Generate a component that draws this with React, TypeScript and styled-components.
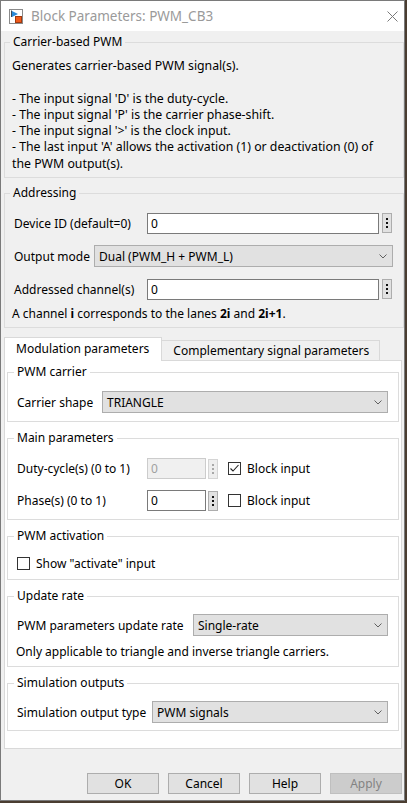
import React from "react";
import styled, { createGlobalStyle } from "styled-components";

const GlobalStyle = createGlobalStyle`
  html, body { margin: 0; padding: 0; }
  body {
    width: 407px; height: 803px; overflow: hidden;
    background: #4a3d31;
    font-family: "Noto Sans", "Open Sans", "DejaVu Sans", sans-serif;
    font-size: 12px; color: #000;
  }
  *, *::before, *::after { box-sizing: border-box; }
`;

const Window = styled.div`
  width: 405px; height: 801px;
  border: 1px solid #7a7a7a;
  background: #f0f0f0;
  display: flex; flex-direction: column;
  overflow: hidden;
`;

const TitleBar = styled.div`
  height: 30px; flex: none; background: #fff;
  display: flex; align-items: center;
  padding-left: 8px;
`;

const TitleText = styled.span`
  margin-left: 8px; color: #9a9a9a; font-size: 13.5px; white-space: nowrap;
`;

const CloseBtn = styled.div`
  margin-left: auto; width: 24px; height: 30px;
  display: flex; align-items: center; justify-content: center;
`;

const Body = styled.div`
  flex: 1; display: flex; flex-direction: column;
  padding: 3px 0 0 3px;
`;

const Group = styled.fieldset<{ $pad: string; $mt?: number }>`
  margin: ${p => p.$mt ?? 0}px 0 0 0;
  min-width: 0;
  border: 1px solid #dcdcdc;
  padding: ${p => p.$pad};
  display: flex; flex-direction: column;
`;

const Legend = styled.legend`
  padding: 0 3px; margin-left: -3px; line-height: 16px; white-space: nowrap;
`;

const Description = styled.div`
  line-height: 16.3px; white-space: nowrap; margin-left: -1px;
  font-size: 12.3px;
`;

const FormRow = styled.div<{ $gap?: number; $pl?: number; $pr?: number }>`
  display: flex; align-items: center; height: 22px;
  margin-top: ${p => p.$gap ?? 0}px;
  padding-left: ${p => p.$pl ?? 0}px;
  padding-right: ${p => p.$pr ?? 0}px;
`;

const Label = styled.span<{ $w?: number }>`
  flex: none; white-space: nowrap;
  width: ${p => (p.$w ? `${p.$w}px` : "auto")};
`;

const TextBox = styled.div<{ $w?: number; $disabled?: boolean }>`
  height: 21px;
  ${p => (p.$w ? `width: ${p.$w}px; flex: none;` : "flex: 1;")}
  background: ${p => (p.$disabled ? "#f0f0f0" : "#fff")};
  border: 1px solid ${p => (p.$disabled ? "#cccccc" : "#7a7a7a")};
  color: ${p => (p.$disabled ? "#a0a0a0" : "#000")};
  display: flex; align-items: center; padding-left: 3px;
`;

const EllipsisBtn = styled.span<{ $disabled?: boolean; $ml?: number }>`
  flex: none; width: 10px; height: 20px;
  margin-left: ${p => p.$ml ?? 3}px;
  border: 1px solid ${p => (p.$disabled ? "#d5d5d5" : "#adadad")};
  background: ${p => (p.$disabled ? "#eeeeee" : "#e1e1e1")};
  display: flex; flex-direction: column; align-items: center; justify-content: center; gap: 2px;
`;

const Dot = styled.i<{ $disabled?: boolean }>`
  display: block; width: 2px; height: 2px;
  background: ${p => (p.$disabled ? "#a8a8a8" : "#111")};
`;

const Combo = styled.div`
  flex: 1; height: 22px;
  background: #e1e1e1; border: 1px solid #adadad;
  display: flex; align-items: center; justify-content: space-between;
  padding: 0 5px 0 4px;
`;

const Note = styled.div<{ $mt?: number; $ml?: number }>`
  line-height: 16px; white-space: nowrap;
  margin-top: ${p => p.$mt ?? 0}px;
  margin-left: ${p => p.$ml ?? 0}px;
`;

const TabBar = styled.div`
  display: flex; align-items: flex-end; height: 24px; margin-top: 9px;
  position: relative; z-index: 1;
`;

const Tab = styled.div<{ $active?: boolean }>`
  height: ${p => (p.$active ? 24 : 20)}px;
  margin-bottom: ${p => (p.$active ? 0 : 1)}px;
  margin-left: ${p => (p.$active ? 0 : -1)}px;
  padding: 0 ${p => (p.$active ? 12 : 10)}px 0 11px;
  background: ${p => (p.$active ? "#fff" : "#f0f0f0")};
  border: 1px solid #d9d9d9;
  border-bottom: none;
  display: flex; align-items: center;
  padding-bottom: ${p => (p.$active ? 3 : 0)}px;
  white-space: nowrap;
`;

const Panel = styled.div`
  margin: -1px 2px 0 0;
  background: #fff;
  border: 1px solid #d9d9d9;
  padding: 3px 2px 17px 2px;
  display: flex; flex-direction: column;
`;

const ParamGrid = styled.div`
  display: grid;
  grid-template-columns: 130px 61px 20px auto;
  grid-auto-rows: 21px;
  row-gap: 11px;
  align-items: center;
`;

const CheckLabel = styled.label`
  display: flex; align-items: center; gap: 6px; white-space: nowrap;
`;

const Box = styled.span`
  width: 13px; height: 13px; flex: none;
  border: 1px solid #333; background: #fff;
  display: flex; align-items: center; justify-content: center;
`;

const Footer = styled.div`
  display: flex; gap: 9px; margin-top: 24px; padding-left: 83px;
`;

const Button = styled.div<{ $disabled?: boolean }>`
  flex: none; width: 72px; height: 21px;
  background: ${p => (p.$disabled ? "#cccccc" : "#e1e1e1")};
  border: 1px solid ${p => (p.$disabled ? "#bfbfbf" : "#adadad")};
  color: ${p => (p.$disabled ? "#838383" : "#000")};
  display: flex; align-items: center; justify-content: center;
`;

const Chevron = () => (
  <svg width="8" height="5" viewBox="0 0 8 5">
    <polyline points="0.5,0.5 4,4 7.5,0.5" fill="none" stroke="#606060" strokeWidth="1" />
  </svg>
);

const Ellipsis = ({ disabled, ml }: { disabled?: boolean; ml?: number }) => (
  <EllipsisBtn $disabled={disabled} $ml={ml}>
    <Dot $disabled={disabled} />
    <Dot $disabled={disabled} />
    <Dot $disabled={disabled} />
  </EllipsisBtn>
);

const CheckBox = ({ checked }: { checked?: boolean }) => (
  <Box>
    {checked && (
      <svg width="11" height="11" viewBox="0 0 11 11">
        <polyline points="1.5,5.5 4,8 9.5,2" fill="none" stroke="#222" strokeWidth="1.1" />
      </svg>
    )}
  </Box>
);

const BlockIcon = () => (
  <svg width="14" height="15" viewBox="0 0 14 15">
    <rect x="0.5" y="0.5" width="13" height="14" fill="#fff" stroke="#8a8a8a" />
    <line x1="2.5" y1="1.5" x2="2.5" y2="8" stroke="#3a4a5a" strokeWidth="1" />
    <polygon points="3,2 9,5 3,8" fill="#2a8ad8" />
    <rect x="6.5" y="7.5" width="6" height="6" fill="#f05a1a" stroke="#a03a10" />
  </svg>
);

export default function App() {
  return (
    <>
      <GlobalStyle />
      <Window>
        <TitleBar>
          <BlockIcon />
          <TitleText>Block Parameters: PWM_CB3</TitleText>
          <CloseBtn>
            <svg width="11" height="11" viewBox="0 0 11 11">
              <path d="M0.5 0.5 L10.5 10.5 M10.5 0.5 L0.5 10.5" stroke="#7a7a7a" strokeWidth="1" />
            </svg>
          </CloseBtn>
        </TitleBar>
        <Body>
          <Group $pad="8px 0 5px 8px">
            <Legend>Carrier-based PWM</Legend>
            <Description>
              Generates carrier-based PWM signal(s).
              <br />
              <br />
              - The input signal 'D' is the duty-cycle.
              <br />
              - The input signal 'P' is the carrier phase-shift.
              <br />
              - The input signal '&gt;' is the clock input.
              <br />
              - The last input 'A' allows the activation (1) or deactivation (0) of
              <br />
              the PWM output(s).
            </Description>
          </Group>

          <Group $pad="11px 0 5px 8px" $mt={7}>
            <Legend>Addressing</Legend>
            <FormRow $pl={1} $pr={11}>
              <Label $w={133}>Device ID (default=0)</Label>
              <TextBox>0</TextBox>
              <Ellipsis />
            </FormRow>
            <FormRow $gap={11} $pl={1} $pr={10}>
              <Label $w={80}>Output mode</Label>
              <Combo>
                <span>Dual (PWM_H + PWM_L)</span>
                <Chevron />
              </Combo>
            </FormRow>
            <FormRow $gap={11} $pl={1} $pr={11}>
              <Label $w={133}>Addressed channel(s)</Label>
              <TextBox>0</TextBox>
              <Ellipsis />
            </FormRow>
            <Note $mt={6} $ml={-1}>
              A channel <b>i</b> corresponds to the lanes <b>2i</b> and <b>2i+1</b>.
            </Note>
          </Group>

          <TabBar>
            <Tab $active>Modulation parameters</Tab>
            <Tab>Complementary signal parameters</Tab>
          </TabBar>
          <Panel>
            <Group $pad="11px 10px 8px 9px">
              <Legend>PWM carrier</Legend>
              <FormRow>
                <Label $w={85}>Carrier shape</Label>
                <Combo>
                  <span>TRIANGLE</span>
                  <Chevron />
                </Combo>
              </FormRow>
            </Group>

            <Group $pad="12px 10px 8px 9px" $mt={8}>
              <Legend>Main parameters</Legend>
              <ParamGrid>
                <Label>Duty-cycle(s) (0 to 1)</Label>
                <TextBox $w={59} $disabled>0</TextBox>
                <Ellipsis disabled ml={0} />
                <CheckLabel>
                  <CheckBox checked />
                  Block input
                </CheckLabel>
                <Label>Phase(s) (0 to 1)</Label>
                <TextBox $w={59}>0</TextBox>
                <Ellipsis ml={0} />
                <CheckLabel>
                  <CheckBox />
                  Block input
                </CheckLabel>
              </ParamGrid>
            </Group>

            <Group $pad="11px 10px 7px 9px" $mt={8}>
              <Legend>PWM activation</Legend>
              <CheckLabel>
                <CheckBox />
                Show "activate" input
              </CheckLabel>
            </Group>

            <Group $pad="10px 10px 6px 9px" $mt={8}>
              <Legend>Update rate</Legend>
              <FormRow>
                <Label $w={176}>PWM parameters update rate</Label>
                <Combo>
                  <span>Single-rate</span>
                  <Chevron />
                </Combo>
              </FormRow>
              <Note $mt={8} $ml={-1}>
                Only applicable to triangle and inverse triangle carriers.
              </Note>
            </Group>

            <Group $pad="10px 10px 7px 9px" $mt={8}>
              <Legend>Simulation outputs</Legend>
              <FormRow>
                <Label $w={135}>Simulation output type</Label>
                <Combo>
                  <span>PWM signals</span>
                  <Chevron />
                </Combo>
              </FormRow>
            </Group>
          </Panel>

          <Footer>
            <Button>OK</Button>
            <Button>Cancel</Button>
            <Button>Help</Button>
            <Button $disabled>Apply</Button>
          </Footer>
        </Body>
      </Window>
    </>
  );
}
